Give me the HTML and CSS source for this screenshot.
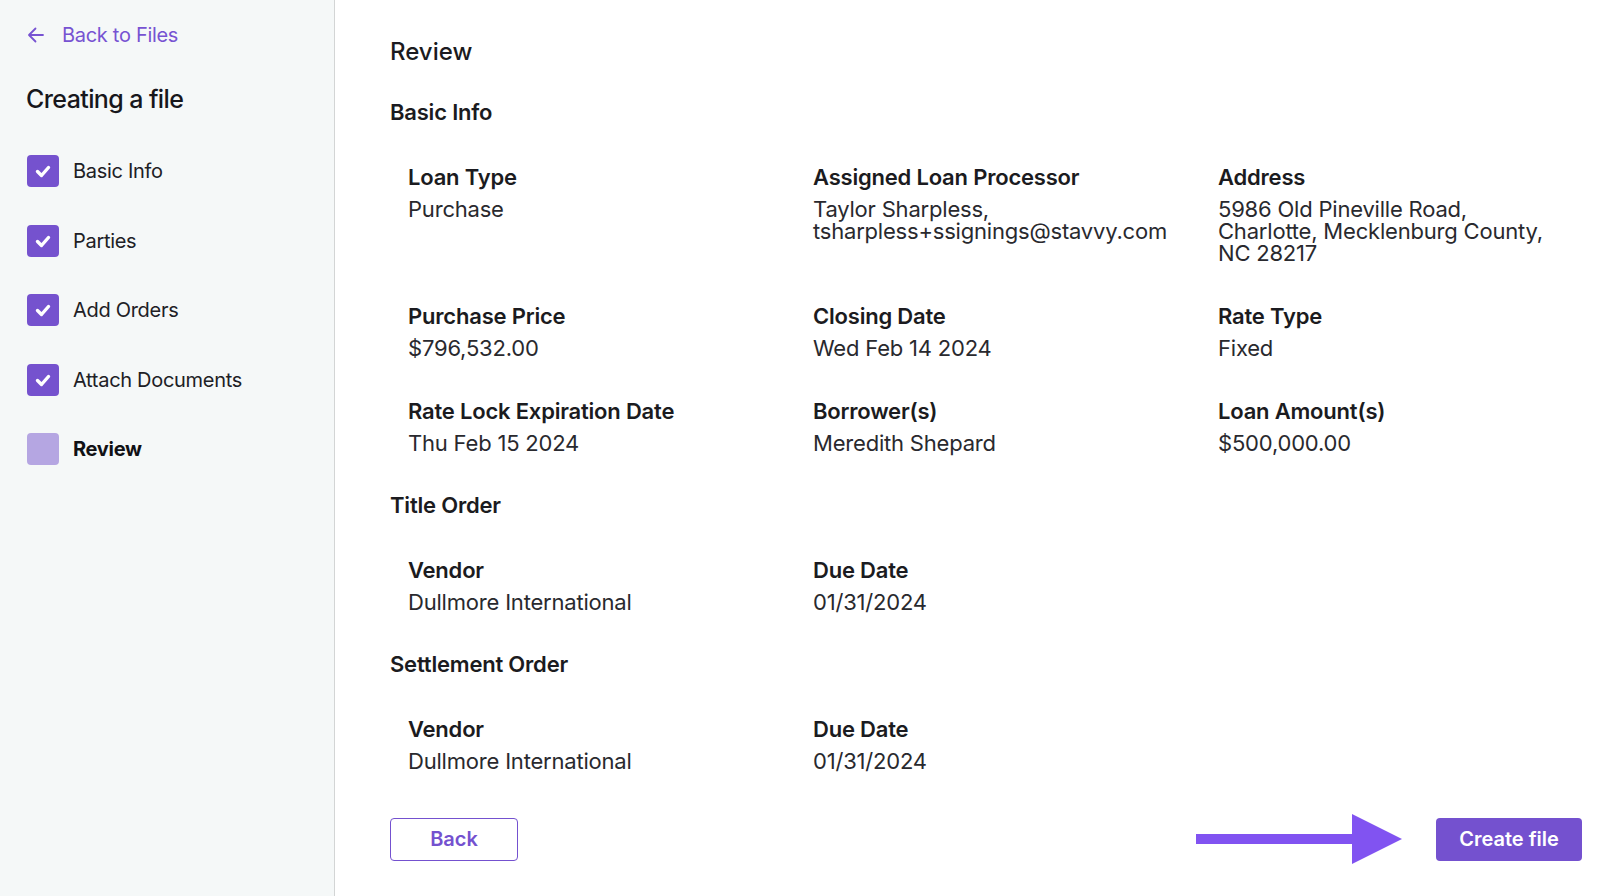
FILE: index.html
```html
<!DOCTYPE html>
<html lang="en">
<head>
  <meta charset="UTF-8">
  <title>Creating a file - Review</title>

  <link rel="stylesheet" href="styles.css">
</head>

<body>

<aside class="sidebar">
  <a class="back-link" href="#">
    <svg class="back-icon" width="18" height="18" viewBox="0 0 18 18">
      <path d="M16 9H2.5M8.5 2.5L2 9l6.5 6.5" fill="none" stroke="currentColor" stroke-width="1.8" stroke-linecap="round" stroke-linejoin="round"/>
    </svg>
    Back to Files
  </a>

  <h1 class="sidebar-title">Creating a file</h1>

  <ul class="steps">
    <li class="step done">
      <span class="step-box"><svg width="32" height="32" viewBox="0 0 32 32"><polyline points="10.5,16.5 14.5,20.5 21.5,12.5" fill="none" stroke="#fff" stroke-width="3.4" stroke-linecap="round" stroke-linejoin="round"/></svg></span>
      Basic Info
    </li>
    <li class="step done">
      <span class="step-box"><svg width="32" height="32" viewBox="0 0 32 32"><polyline points="10.5,16.5 14.5,20.5 21.5,12.5" fill="none" stroke="#fff" stroke-width="3.4" stroke-linecap="round" stroke-linejoin="round"/></svg></span>
      Parties
    </li>
    <li class="step done">
      <span class="step-box"><svg width="32" height="32" viewBox="0 0 32 32"><polyline points="10.5,16.5 14.5,20.5 21.5,12.5" fill="none" stroke="#fff" stroke-width="3.4" stroke-linecap="round" stroke-linejoin="round"/></svg></span>
      Add Orders
    </li>
    <li class="step done">
      <span class="step-box"><svg width="32" height="32" viewBox="0 0 32 32"><polyline points="10.5,16.5 14.5,20.5 21.5,12.5" fill="none" stroke="#fff" stroke-width="3.4" stroke-linecap="round" stroke-linejoin="round"/></svg></span>
      Attach Documents
    </li>
    <li class="step current">
      <span class="step-box"></span>
      Review
    </li>
  </ul>
</aside>

<main class="content">
  <h2 class="page-title">Review</h2>

  <section class="section">
    <h3 class="section-title">Basic Info</h3>
    <div class="fields">
      <div class="field">
        <div class="field-label">Loan Type</div>
        <div class="field-value">Purchase</div>
      </div>
      <div class="field">
        <div class="field-label">Assigned Loan Processor</div>
        <div class="field-value">Taylor Sharpless, tsharpless+ssignings@stavvy.com</div>
      </div>
      <div class="field">
        <div class="field-label">Address</div>
        <div class="field-value">5986 Old Pineville Road,<br>Charlotte, Mecklenburg County,<br>NC 28217</div>
      </div>
      <div class="field">
        <div class="field-label">Purchase Price</div>
        <div class="field-value">$796,532.00</div>
      </div>
      <div class="field">
        <div class="field-label">Closing Date</div>
        <div class="field-value">Wed Feb 14 2024</div>
      </div>
      <div class="field">
        <div class="field-label">Rate Type</div>
        <div class="field-value">Fixed</div>
      </div>
      <div class="field">
        <div class="field-label">Rate Lock Expiration Date</div>
        <div class="field-value">Thu Feb 15 2024</div>
      </div>
      <div class="field">
        <div class="field-label">Borrower(s)</div>
        <div class="field-value">Meredith Shepard</div>
      </div>
      <div class="field">
        <div class="field-label">Loan Amount(s)</div>
        <div class="field-value">$500,000.00</div>
      </div>
    </div>
  </section>

  <section class="section">
    <h3 class="section-title">Title Order</h3>
    <div class="fields">
      <div class="field">
        <div class="field-label">Vendor</div>
        <div class="field-value">Dullmore International</div>
      </div>
      <div class="field">
        <div class="field-label">Due Date</div>
        <div class="field-value">01/31/2024</div>
      </div>
    </div>
  </section>

  <section class="section">
    <h3 class="section-title">Settlement Order</h3>
    <div class="fields">
      <div class="field">
        <div class="field-label">Vendor</div>
        <div class="field-value">Dullmore International</div>
      </div>
      <div class="field">
        <div class="field-label">Due Date</div>
        <div class="field-value">01/31/2024</div>
      </div>
    </div>
  </section>

  <div class="actions">
    <button type="button" class="btn btn-outline">Back</button>
    <div class="actions-right">
      <!-- pointer to the submit button -->
      <svg class="pointer" width="206" height="50" viewBox="0 0 206 50">
        <rect x="0" y="20" width="157" height="10" fill="#8153f1"/>
        <polygon points="156,0 206,25 156,50" fill="#8153f1"/>
      </svg>
      <button type="submit" class="btn btn-primary">Create file</button>
    </div>
  </div>
</main>

</body>
</html>
```

FILE: styles.css
```css
body {
  margin: 0;
  font-family: Inter, "Noto Sans", sans-serif;
  color: #1b1b20;
  background: #fff;
  display: flex;
  min-height: 100vh;
}
.sidebar {
  width: 308px;
  flex-shrink: 0;
  background-color: #f5f8f8;
  border-right: 1px solid #d3d5d5;
  padding: 23px 0 0 26px;
}
.back-link {
  display: flex;
  align-items: center;
  gap: 17px;
  font-size: 20px;
  line-height: 24px;
  letter-spacing: -0.3px;
  color: #7753d2;
  text-decoration: none;
}
.back-icon {
  margin-left: 1px;
}
.sidebar-title {
  font-size: 25px;
  line-height: 32px;
  font-weight: 500;
  letter-spacing: -0.6px;
  margin: 36px 0 0;
  color: #17171c;
}
.steps {
  list-style: none;
  margin: 40px 0 0;
  padding: 0;
  display: flex;
  flex-direction: column;
  gap: 37.5px;
}
.step {
  display: flex;
  align-items: center;
  gap: 14px;
  font-size: 20px;
  line-height: 32px;
  letter-spacing: -0.3px;
  color: #202025;
}
.step-box {
  width: 32px;
  height: 32px;
  margin-left: 1px;
  border-radius: 4px;
  background-color: #7552ce;
  display: block;
}
.step-box svg {
  display: block;
}
.step.current {
  font-weight: 700;
  color: #111115;
}
.step.current .step-box {
  background-color: #b5a6e2;
}
.content {
  flex: 1;
  padding: 36px 34px 0 55px;
}
.page-title {
  font-size: 24px;
  line-height: 32px;
  font-weight: 500;
  margin: 0 0 30px;
}
.section + .section {
  margin-top: 37px;
}
.section-title {
  font-size: 22px;
  line-height: 28px;
  font-weight: 600;
  letter-spacing: -0.2px;
  margin: 0 0 38px;
}
.fields {
  display: grid;
  grid-template-columns: repeat(3, 340px);
  column-gap: 65px;
  row-gap: 39px;
  padding-left: 18px;
}
.field-label {
  font-size: 22px;
  line-height: 26px;
  font-weight: 600;
  letter-spacing: -0.2px;
  margin-bottom: 8px;
}
.field-value {
  font-size: 22px;
  line-height: 22px;
  letter-spacing: -0.2px;
  color: #29292e;
}
.actions {
  display: flex;
  justify-content: space-between;
  align-items: center;
  margin-top: 42px;
}
.actions-right {
  display: flex;
  align-items: center;
  gap: 34px;
}
.pointer {
  display: block;
}
.btn {
  font-family: Inter, "Noto Sans", sans-serif;
  font-size: 20px;
  font-weight: 600;
  height: 43px;
  border-radius: 4px;
  cursor: pointer;
}
.btn-outline {
  width: 128px;
  background: #fff;
  color: #7451cf;
  border: 1.5px solid #7451cf;
}
.btn-primary {
  width: 146px;
  background-color: #7451cf;
  color: #fff;
  border: none;
}
```
